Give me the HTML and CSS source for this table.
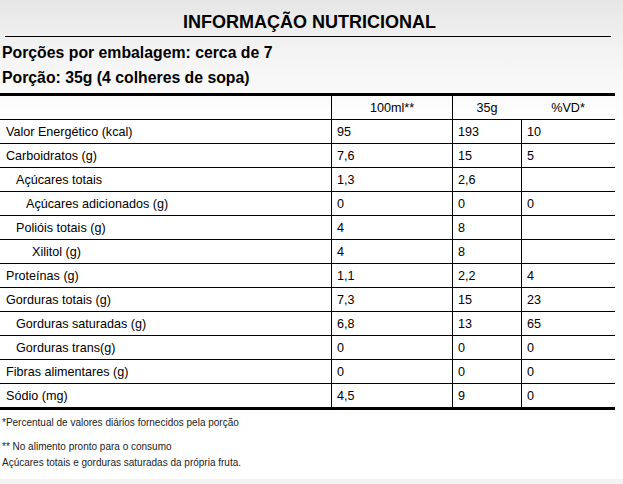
FILE: index.html
```html
<!DOCTYPE html>
<html lang="pt-BR">
<head>
<meta charset="utf-8">
<title>Informação Nutricional</title>
<link rel="stylesheet" href="styles.css">
</head>
<body>
<div class="page">
  <div class="label">
    <h1 class="title">INFORMAÇÃO NUTRICIONAL</h1>
    <p class="serving first">Porções por embalagem: cerca de 7</p>
    <p class="serving">Porção: 35g (4 colheres de sopa)</p>
    <table class="facts">
      <thead>
        <tr><th class="name"></th><th class="c100">100ml**</th><th class="c35">35g</th><th class="cvd">%VD*</th></tr>
      </thead>
      <tbody>
        <tr><td class="name">Valor Energético (kcal)</td><td>95</td><td>193</td><td>10</td></tr>
        <tr><td class="name">Carboidratos (g)</td><td>7,6</td><td>15</td><td>5</td></tr>
        <tr><td class="name lv1">Açúcares totais</td><td>1,3</td><td>2,6</td><td></td></tr>
        <tr><td class="name lv2">Açúcares adicionados (g)</td><td>0</td><td>0</td><td>0</td></tr>
        <tr><td class="name lv1">Polióis totais (g)</td><td>4</td><td>8</td><td></td></tr>
        <tr><td class="name lv3">Xilitol (g)</td><td>4</td><td>8</td><td></td></tr>
        <tr><td class="name">Proteínas (g)</td><td>1,1</td><td>2,2</td><td>4</td></tr>
        <tr><td class="name">Gorduras totais (g)</td><td>7,3</td><td>15</td><td>23</td></tr>
        <tr><td class="name lv1">Gorduras saturadas (g)</td><td>6,8</td><td>13</td><td>65</td></tr>
        <tr><td class="name lv1">Gorduras trans(g)</td><td>0</td><td>0</td><td>0</td></tr>
        <tr><td class="name">Fibras alimentares (g)</td><td>0</td><td>0</td><td>0</td></tr>
        <tr><td class="name">Sódio (mg)</td><td>4,5</td><td>9</td><td>0</td></tr>
      </tbody>
    </table>
    <div class="notes">
      <p class="note n1">*Percentual de valores diários fornecidos pela porção</p>
      <p class="note n2">** No alimento pronto para o consumo</p>
      <p class="note n3">Açúcares totais e gorduras saturadas da própria fruta.</p>
    </div>
  </div>
</div>
</body>
</html>
```

FILE: styles.css
```css
html, body {
  margin: 0;
  padding: 0;
}
body {
  background: #f3f3f3;
  font-family: "Liberation Sans", Arial, sans-serif;
  color: #000;
}
.page {
  height: 479px;
  background: linear-gradient(to bottom, #e6e6e6 0, #f3f3f3 50px, #fbfbfb 100px, #ffffff 125px);
  overflow: hidden;
}
.label {
  width: 615px;
}
.title {
  margin: 0 4px 0 5px;
  padding: 12px 0 3px 3px;
  font-size: 18px;
  line-height: 21px;
  font-weight: bold;
  text-align: center;
  border-bottom: 1px solid #000;
}
.serving {
  margin: 0 0 0 2px;
  font-size: 15.8px;
  line-height: 25px;
  font-weight: bold;
}
.serving.first {
  margin-top: 3px;
}
.facts {
  margin-top: 3px;
  width: 615px;
  border-collapse: separate;
  border-spacing: 0;
  border-top: 3px solid #000;
  border-bottom: 3px solid #000;
  font-size: 12.6px;
  table-layout: fixed;
}
.facts th {
  height: 23px;
  padding: 0;
  font-weight: normal;
  text-align: center;
  vertical-align: middle;
  border-left: 1px solid #000;
}
.facts th.name {
  width: 331px;
  border-left: none;
}
.facts th.c100 { width: 120px; }
.facts th.c35 { width: 68px; }
.facts th.cvd { border-left: none; }
.facts td {
  box-sizing: border-box;
  height: 24px;
  padding: 0 0 0 5px;
  border-top: 1px solid #000;
  border-left: 1px solid #000;
  vertical-align: middle;
  white-space: nowrap;
}
.facts td.name {
  border-left: none;
  padding-left: 6px;
}
.facts td.lv1 { padding-left: 16px; }
.facts td.lv2 { padding-left: 26px; }
.facts td.lv3 { padding-left: 32px; }
.notes {
  color: #222;
  font-size: 10px;
  line-height: 12px;
}
.note {
  margin: 0 0 0 2px;
}
.n1 { margin-top: 7px; }
.n2 { margin-top: 12px; }
.n3 { margin-top: 4px; }
```
